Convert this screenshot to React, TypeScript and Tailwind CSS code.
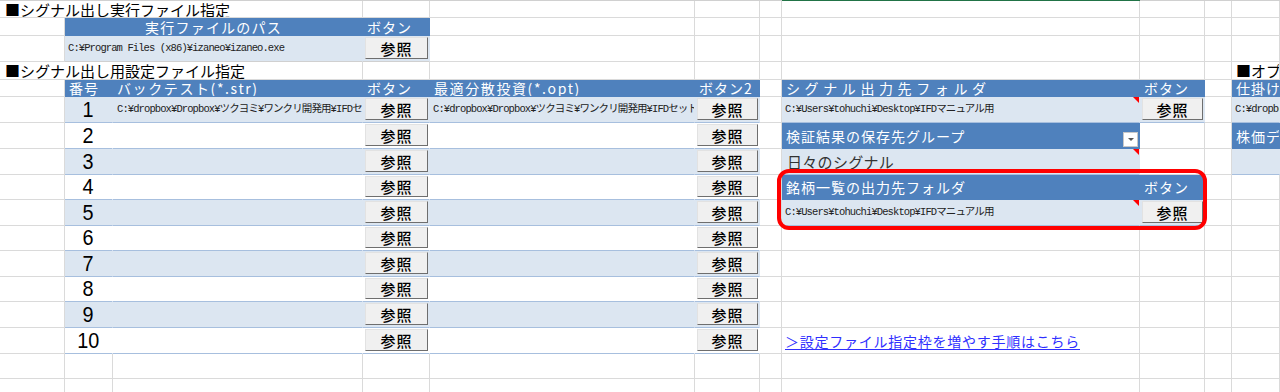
import React from "react";

const jp = "font-['Noto_Sans_CJK_JP',sans-serif]";
const mono =
  "font-['Liberation_Mono','Noto_Sans_CJK_JP',monospace] text-[10.5px] tracking-[-0.9px] text-[#222] pl-[3px]";

// column widths (Excel columns A..K)
const A = "w-[65px]";
const B = "w-[48px]";
const C = "w-[250px]";
const D = "w-[67px]";
const E = "w-[265px]";
const F = "w-[65px]";
const G = "w-[22px]";
const H = "w-[358px]";
const I = "w-[65px]";
const J = "w-[27px]";
const K = "flex-1 min-w-0";

type Kind = "grid" | "head" | "fill" | "white";
const KIND: Record<Kind, string> = {
  grid: "bg-white border-r border-b border-[#dadada]",
  head: "bg-[#4f81bd] text-white border-r border-b border-r-[#4f81bd] border-b-[#4f81bd]",
  fill: "bg-[#dce6f1] border-r border-b border-r-[#dce6f1] border-b-[#a7bfde]",
  white: "bg-white border-r border-b border-r-white border-b-[#a7bfde]",
};

function Cell({
  w,
  kind = "grid",
  className = "",
  children,
}: {
  w: string;
  kind?: Kind;
  className?: string;
  children?: React.ReactNode;
}) {
  return (
    <div
      className={`${w} ${KIND[kind]} relative flex h-full shrink-0 items-center overflow-hidden whitespace-nowrap ${className}`}
    >
      {children}
    </div>
  );
}

function Head({ children, className = "tracking-[1px]" }: { children: React.ReactNode; className?: string }) {
  return <span className={`pl-[4px] text-[14px] leading-none ${className}`}>{children}</span>;
}

function Btn() {
  return (
    <div className="mb-[2px] ml-[2px] mr-[1px] mt-[1px] flex flex-1 items-center justify-center self-stretch border border-b-[#6e6e6e] border-l-[#e2e2e2] border-r-[#6e6e6e] border-t-[#e2e2e2] bg-[#f0f0f0] text-[15px] font-medium leading-none tracking-[1px] text-black">
      参照
    </div>
  );
}

function Note() {
  return (
    <span className="absolute right-0 top-0 h-0 w-0 border-l-[6px] border-t-[6px] border-l-transparent border-t-[#ff0000]" />
  );
}

const strPath = "C:¥dropbox¥Dropbox¥ツクヨミ¥ワンクリ開発用¥IFDセット¥シグナル.str";
const optPath = "C:¥dropbox¥Dropbox¥ツクヨミ¥ワンクリ開発用¥IFDセット¥分散.opt";
const outPath = "C:¥Users¥tohuchi¥Desktop¥IFDマニュアル用";
const heights = ["h-[26px]", "h-[26px]", "h-[26px]", "h-[25px]", "h-[26px]", "h-[25px]", "h-[26px]", "h-[25px]", "h-[26px]", "h-[26px]"];

function RightSide({ n }: { n: number }) {
  if (n === 1)
    return (
      <>
        <Cell w={H} kind="fill">
          <span className={mono}>{outPath}</span>
          <Note />
        </Cell>
        <Cell w={I} kind="fill" className="border-r-[#dadada]">
          <Btn />
        </Cell>
        <Cell w={J} />
        <Cell w={K} kind="fill">
          <span className={mono}>C:¥dropbox¥Dropbox¥ツクヨミ</span>
        </Cell>
      </>
    );
  if (n === 2)
    return (
      <>
        <Cell w={H} kind="head">
          <Head>検証結果の保存先グループ</Head>
          <span className="mb-[1px] ml-auto mr-[1px] flex h-[15px] w-[15px] items-center justify-center self-end border border-[#c8c8c8] bg-white">
            <span className="h-0 w-0 border-l-[3px] border-r-[3px] border-t-[3px] border-l-transparent border-r-transparent border-t-[#555]" />
          </span>
        </Cell>
        <Cell w={I} />
        <Cell w={J} />
        <Cell w={K} kind="head">
          <Head>株価データフォルダ</Head>
        </Cell>
      </>
    );
  if (n === 3)
    return (
      <>
        <Cell w={H} kind="fill">
          <span className="pl-[5px] text-[15px] leading-none tracking-[0.3px] text-[#333]">日々のシグナル</span>
          <Note />
        </Cell>
        <Cell w={I} />
        <Cell w={J} />
        <Cell w={K} kind="fill" />
      </>
    );
  if (n === 4)
    return (
      <>
        <Cell w={H} kind="head">
          <Head>銘柄一覧の出力先フォルダ</Head>
        </Cell>
        <Cell w={I} kind="head">
          <Head>ボタン</Head>
        </Cell>
        <Cell w={J} />
        <Cell w={K} />
      </>
    );
  if (n === 5)
    return (
      <>
        <Cell w={H} kind="fill">
          <span className={mono}>{outPath}</span>
          <Note />
        </Cell>
        <Cell w={I} kind="fill" className="border-r-[#dadada]">
          <Btn />
        </Cell>
        <Cell w={J} />
        <Cell w={K} />
      </>
    );
  return (
    <>
      <Cell w={H}>
        {n === 10 && (
          <span className="pl-[3px] text-[14px] leading-none tracking-[0.75px] text-[#2f2fff] underline underline-offset-2">
            ＞設定ファイル指定枠を増やす手順はこちら
          </span>
        )}
      </Cell>
      <Cell w={I} />
      <Cell w={J} />
      <Cell w={K} />
    </>
  );
}

function PlainTail() {
  return (
    <>
      <Cell w={E} />
      <Cell w={F} />
      <Cell w={G} />
      <Cell w={H} />
      <Cell w={I} />
      <Cell w={J} />
      <Cell w={K} />
    </>
  );
}

export default function App() {
  const rows = [1, 2, 3, 4, 5, 6, 7, 8, 9, 10];
  return (
    <div className={`relative h-[392px] w-[1280px] overflow-hidden bg-white text-black ${jp}`}>
      {/* top edge */}
      <div className="flex h-[1px]">
        <div className="w-[782px] bg-[#d0d0d0]" />
        <div className="w-[358px] bg-[#217346]" />
        <div className="flex-1 bg-[#d0d0d0]" />
      </div>

      <div className="flex h-[17px]">
        <Cell w="w-[363px]">
          <span className="pl-[5px] text-[15px] leading-none">■シグナル出し実行ファイル指定</span>
        </Cell>
        <Cell w={D} />
        <PlainTail />
      </div>

      <div className="flex h-[18px]">
        <Cell w={A} />
        <Cell w="w-[298px]" kind="head" className="justify-center">
          <span className="text-[14px] leading-none tracking-[1.2px]">実行ファイルのパス</span>
        </Cell>
        <Cell w={D} kind="head">
          <Head>ボタン</Head>
        </Cell>
        <PlainTail />
      </div>

      <div className="flex h-[26px]">
        <Cell w={A} />
        <Cell w="w-[298px]" kind="fill" className="border-b-[#d0d0d0]">
          <span className={mono}>C:¥Program Files (x86)¥izaneo¥izaneo.exe</span>
        </Cell>
        <Cell w={D} kind="fill" className="border-b-[#d0d0d0] border-r-[#dadada]">
          <Btn />
        </Cell>
        <PlainTail />
      </div>

      <div className="flex h-[18px]">
        <Cell w="w-[363px]">
          <span className="pl-[5px] text-[15px] leading-none">■シグナル出し用設定ファイル指定</span>
        </Cell>
        <Cell w={D} />
        <Cell w={E} />
        <Cell w={F} />
        <Cell w={G} />
        <Cell w={H} />
        <Cell w={I} />
        <Cell w={J} />
        <Cell w={K}>
          <span className="pl-[4px] text-[15px] leading-none">■オプション設定</span>
        </Cell>
      </div>

      <div className="flex h-[17px]">
        <Cell w={A} />
        <Cell w={B} kind="head">
          <Head>番号</Head>
        </Cell>
        <Cell w={C} kind="head">
          <Head className="tracking-[1.6px]">バックテスト(*.str)</Head>
        </Cell>
        <Cell w={D} kind="head">
          <Head>ボタン</Head>
        </Cell>
        <Cell w={E} kind="head">
          <Head className="tracking-[1.6px]">最適分散投資(*.opt)</Head>
        </Cell>
        <Cell w={F} kind="head">
          <Head>ボタン2</Head>
        </Cell>
        <Cell w={G} />
        <Cell w={H} kind="head">
          <Head className="tracking-[4.6px]">シグナル出力先フォルダ</Head>
        </Cell>
        <Cell w={I} kind="head">
          <Head>ボタン</Head>
        </Cell>
        <Cell w={J} />
        <Cell w={K} kind="head">
          <Head>仕掛けファイル</Head>
        </Cell>
      </div>

      {rows.map((n, i) => {
        const kind: Kind = n % 2 === 1 ? "fill" : "white";
        return (
          <div key={n} className={`flex ${heights[i]}`}>
            <Cell w={A} />
            <Cell w={B} kind={kind} className="justify-center">
              <span className="scale-x-90 font-['Liberation_Sans',sans-serif] text-[22px] leading-none">{n}</span>
            </Cell>
            <Cell w={C} kind={kind}>
              {n === 1 && <span className={`${mono} pl-[4px]`}>{strPath}</span>}
            </Cell>
            <Cell w={D} kind={kind}>
              <Btn />
            </Cell>
            <Cell w={E} kind={kind}>
              {n === 1 && <span className={mono}>{optPath}</span>}
            </Cell>
            <Cell w={F} kind={kind}>
              <Btn />
            </Cell>
            <Cell w={G} />
            <RightSide n={n} />
          </div>
        );
      })}

      <div className="flex h-[25px]">
        <Cell w={A} />
        <Cell w={B} />
        <Cell w={C} />
        <Cell w={D} />
        <PlainTail />
      </div>
      <div className="flex h-[25px]">
        <Cell w={A} />
        <Cell w={B} />
        <Cell w={C} />
        <Cell w={D} />
        <PlainTail />
      </div>

      {/* red highlight frame */}
      <div className="pointer-events-none absolute left-[777px] top-[169px] h-[61px] w-[430px] rounded-[12px] border-4 border-[#ff0000]" />
    </div>
  );
}
